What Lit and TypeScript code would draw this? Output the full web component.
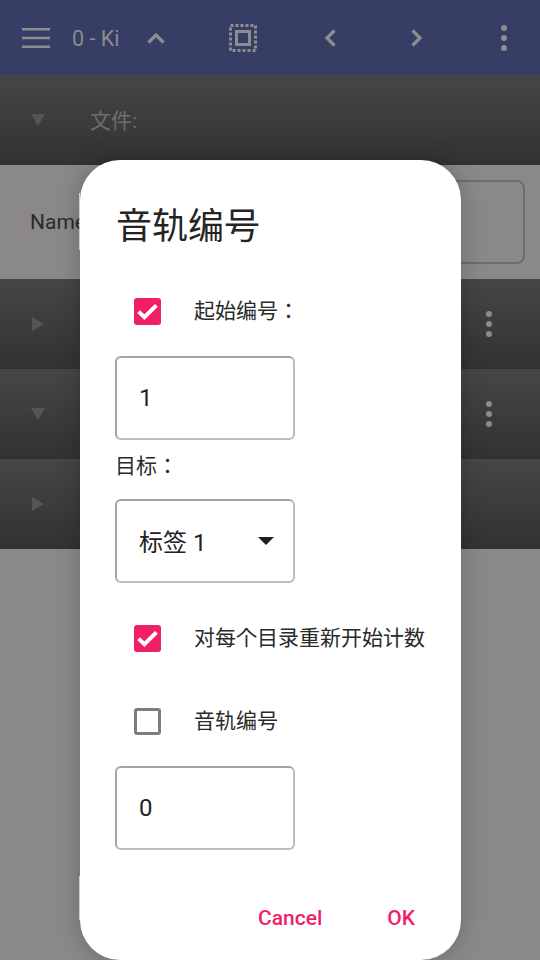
import { LitElement, html, css } from "lit";
import { customElement } from "lit/decorators.js";

const kebabRow = html`<svg class="kebab" viewBox="0 0 8 30" width="8" height="30"><circle cx="4" cy="5" r="3"/><circle cx="4" cy="15" r="3"/><circle cx="4" cy="25" r="3"/></svg>`;
const check = html`<svg class="check" viewBox="0 0 27 27" width="27" height="27"><rect width="27" height="27" rx="3" fill="#ef1f68"/><path d="M4.6 13.6l5.8 5.6L22.4 7.4" fill="none" stroke="#fff" stroke-width="4"/></svg>`;
const triR = html`<svg class="tri" viewBox="0 0 12 14" width="12" height="14"><path d="M0 0L12 7L0 14Z"/></svg>`;
const triD = html`<svg class="tri" viewBox="0 0 14 12" width="14" height="12"><path d="M0 0L14 0L7 12Z"/></svg>`;

@customElement("app-root")
export class AppRoot extends LitElement {
  static styles = css`
    :host { display: block; position: relative; width: 540px; height: 960px; overflow: hidden; background: #8a888a; font-family: Roboto, "Noto Sans CJK JP", sans-serif; color: #262626; }
    .toolbar { height: 75px; background: #363e66; display: flex; align-items: center; padding-left: 22px; box-sizing: border-box; }
    .toolbar svg { display: block; flex: none; }
    .title { font-size: 21.5px; color: #8b8b8f; width: 47px; margin: 1px 0 0 22px; overflow: hidden; white-space: nowrap; flex: none; }
    .up { margin-left: 28px; }
    .sel-ic { margin-left: 64px; }
    .prev { margin-left: 67px; }
    .next { margin-left: 75px; }
    .more { margin-left: 77px; }
    .row { height: 90px; background: linear-gradient(#464646, #323232); display: flex; align-items: center; box-sizing: border-box; padding: 0 47px 0 31px; }
    .row .tri { fill: #555; flex: none; }
    .row .grow { flex: 1; }
    .row .label { font-size: 21px; color: #6e6e6e; margin: 0 0 3px 45px; }
    .kebab { fill: #8b8b8b; display: block; }
    .row.r { padding-left: 32px; }
    .name { height: 114px; display: flex; align-items: center; justify-content: space-between; padding: 0 15px 0 30px; box-sizing: border-box; }
    .name span { font-size: 21px; color: #2b2b2b; }
    .namebox { width: 300px; height: 84px; border: 2px solid #6e6c6e; border-radius: 8px; box-sizing: border-box; }
    .dialog { position: absolute; left: 80px; top: 160px; width: 381px; height: 800px; background: #fff; border-radius: 40px; box-shadow: 0 0 24px rgba(0,0,0,.22); box-sizing: border-box; padding: 42px 35px 0 35px; display: flex; flex-direction: column; }
    .dialog::before, .dialog::after { content: ""; position: absolute; left: -1px; width: 1px; background: rgba(255,255,255,.65); }
    .dialog::before { top: 33px; height: 57px; }
    .dialog::after { top: 716px; height: 44px; }
    h1 { margin: 0 0 0 1px; font-weight: 400; font-size: 36px; line-height: 50px; color: #242424; }
    .checkrow { display: flex; align-items: center; height: 27px; padding-left: 19px; font-size: 21px; color: #2a2a2a; white-space: nowrap; }
    .checkrow .check, .checkrow .box { flex: none; margin-right: 33px; }
    .checkrow .t { margin-top: -5px; }
    .box { width: 27px; height: 27px; border: 3.5px solid #7d7d7d; border-radius: 3px; box-sizing: border-box; }
    .field { width: 180px; height: 84px; box-sizing: border-box; border: 2px solid #b0b0b0; border-top-color: #a4a4a4; border-left-color: #a4a4a4; border-bottom-color: #bcbcbc; border-right-color: #bcbcbc; border-radius: 6px; display: flex; align-items: center; justify-content: space-between; padding: 0 19px 0 22px; font-size: 24px; color: #222; }
    .field .t { margin-top: -2px; }
    .caret { width: 0; height: 0; border-left: 8px solid transparent; border-right: 8px solid transparent; border-top: 8px solid #1f1f1f; }
    .target { font-size: 21px; line-height: 28px; margin: 12px 0 19px; color: #2a2a2a; }
    .actions { display: flex; justify-content: flex-end; gap: 65px; font-size: 21px; line-height: 24px; font-weight: 500; color: #ef1f68; margin-right: 11px; }
    .m46 { margin-top: 46px; }
    .m31 { margin-top: 31px; }
    .m42 { margin-top: 42px; }
    .m56 { margin-top: 56px; }
  `;

  render() {
    return html`
      <div class="toolbar">
        <svg viewBox="0 0 28 20" width="28" height="20"><path d="M0 1.3h28M0 10h28M0 18.7h28" stroke="#8d8d90" stroke-width="2.6" fill="none"/></svg>
        <div class="title">0 - Kids</div>
        <svg class="up" viewBox="0 0 18 12" width="18" height="12"><path d="M1.5 10.5L9 3l7.5 7.5" stroke="#8d8d90" stroke-width="3.2" fill="none"/></svg>
        <svg class="sel-ic" viewBox="0 0 28 28" width="28" height="28"><rect x="1.5" y="1.5" width="25" height="25" fill="none" stroke="#8d8d90" stroke-width="3" stroke-dasharray="3 2"/><rect x="7.5" y="7.5" width="13" height="13" fill="none" stroke="#8d8d90" stroke-width="3"/></svg>
        <svg class="prev" viewBox="0 0 12 18" width="12" height="18"><path d="M10.5 1.5L3 9l7.5 7.5" stroke="#8d8d90" stroke-width="3.2" fill="none"/></svg>
        <svg class="next" viewBox="0 0 12 18" width="12" height="18"><path d="M1.5 1.5L9 9l-7.5 7.5" stroke="#8d8d90" stroke-width="3.2" fill="none"/></svg>
        <svg class="more" viewBox="0 0 8 30" width="8" height="30"><circle cx="4" cy="5" r="3" fill="#8d8d90"/><circle cx="4" cy="15" r="3" fill="#8d8d90"/><circle cx="4" cy="25" r="3" fill="#8d8d90"/></svg>
      </div>
      <div class="row">${triD}<span class="label">文件:</span></div>
      <div class="name"><span>Name</span><div class="namebox"></div></div>
      <div class="row r">${triR}<div class="grow"></div>${kebabRow}</div>
      <div class="row">${triD}<div class="grow"></div>${kebabRow}</div>
      <div class="row r">${triR}</div>
      <div class="dialog">
        <h1>音轨编号</h1>
        <div class="checkrow m46">${check}<span class="t">起始编号：</span></div>
        <div class="field m31">1</div>
        <div class="target">目标：</div>
        <div class="field"><span class="t">标签 1</span><span class="caret"></span></div>
        <div class="checkrow m42">${check}<span class="t">对每个目录重新开始计数</span></div>
        <div class="checkrow m56"><div class="box"></div><span class="t">音轨编号</span></div>
        <div class="field m31">0</div>
        <div class="actions m56"><span>Cancel</span><span>OK</span></div>
      </div>
    `;
  }
}
